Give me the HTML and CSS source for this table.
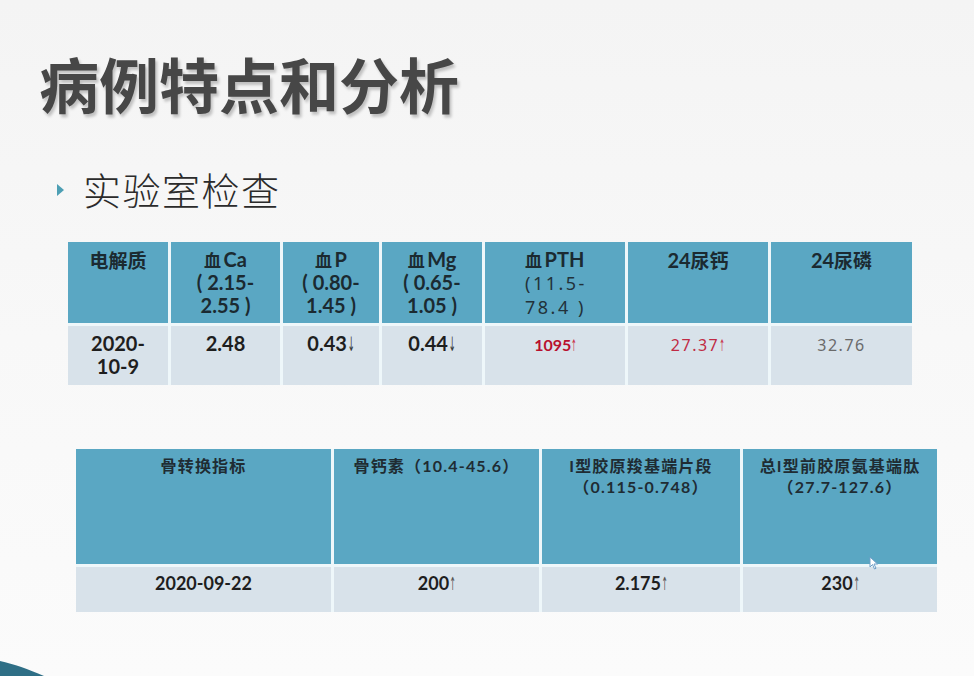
FILE: index.html
```html
<!DOCTYPE html>
<html lang="zh-CN">
<head>
<meta charset="utf-8">
<title>病例特点和分析</title>
<link rel="stylesheet" href="styles.css">
</head>
<body>
<div class="slide">
  <h1 class="title">病例特点和分析</h1>
  <div class="sub">
    <span class="bullet"></span>
    <span class="sub-text">实验室检查</span>
  </div>

  <div class="t1">
    <div class="h"><span class="cjk big">电解质</span></div>
    <div class="h"><span class="cjk">血</span>Ca<br>( 2.15-<br>2.55 )</div>
    <div class="h"><span class="cjk">血</span>P<br>( 0.80-<br>1.45 )</div>
    <div class="h"><span class="cjk">血</span>Mg<br>( 0.65-<br>1.05 )</div>
    <div class="h pth"><span class="cjk">血</span>PTH<br><span class="thin">(11.5-<br>78.4 )</span></div>
    <div class="h">24<span class="cjk big">尿钙</span></div>
    <div class="h">24<span class="cjk big">尿磷</span></div>

    <div class="d">2020-<br>10-9</div>
    <div class="d">2.48</div>
    <div class="d">0.43<span class="arr">↓</span></div>
    <div class="d">0.44<span class="arr">↓</span></div>
    <div class="d"><span class="red-b">1095<span class="arr">↑</span></span></div>
    <div class="d"><span class="red-r">27.37<span class="arr">↑</span></span></div>
    <div class="d"><span class="gray-r">32.76</span></div>
  </div>

  <div class="t2">
    <div class="h">骨转换指标</div>
    <div class="h">骨钙素（10.4-45.6）</div>
    <div class="h">I型胶原羧基端片段<br>（0.115-0.748）</div>
    <div class="h">总I型前胶原氨基端肽<br>（27.7-127.6）</div>

    <div class="d">2020-09-22</div>
    <div class="d">200<span class="arr">↑</span></div>
    <div class="d">2.175<span class="arr">↑</span></div>
    <div class="d">230<span class="arr">↑</span></div>
  </div>

  <svg class="corner" width="50" height="15" viewBox="0 0 50 15" aria-hidden="true">
    <path d="M0 0 C 14 3, 28 8, 44 15 L 0 15 Z" fill="#2f6f86"/>
  </svg>
  <svg class="cursor" width="10" height="14" viewBox="0 0 10 14" aria-hidden="true">
    <path d="M1 1 L1 11 L3.5 8.5 L5.5 13 L7 12.3 L5 8 L8.5 8 Z" fill="#ffffff" stroke="#6f9fc8" stroke-width="1"/>
  </svg>
</div>
</body>
</html>
```
FILE: styles.css
```css
html, body {
  margin: 0;
  padding: 0;
}
body {
  width: 974px;
  height: 676px;
  overflow: hidden;
  background: #f7f7f7;
  font-family: "Lato", "Noto Sans CJK SC", sans-serif;
}
.slide {
  position: relative;
  width: 974px;
  height: 676px;
  background: linear-gradient(180deg, #f4f4f4 0%, #f8f8f8 50%, #fbfbfb 100%);
  overflow: hidden;
}
.title {
  margin: 0;
  padding: 52px 0 0 39px;
  font-family: "Noto Sans CJK SC", sans-serif;
  font-size: 60px;
  line-height: 62px;
  font-weight: 700;
  color: #474747;
  text-shadow: 2px 3px 3px rgba(0, 0, 0, 0.22);
}
.sub {
  display: flex;
  align-items: center;
  margin: 54px 0 0 57px;
  height: 42px;
}
.bullet {
  width: 0;
  height: 0;
  border-top: 6px solid transparent;
  border-bottom: 6px solid transparent;
  border-left: 7px solid #4d9fb4;
  margin-right: 19px;
  margin-top: 2px;
}
.sub-text {
  font-family: "Noto Sans CJK SC", sans-serif;
  font-weight: 300;
  font-size: 38px;
  line-height: 42px;
  letter-spacing: 1.5px;
  color: #2b2b2b;
}
.t1 {
  display: grid;
  grid-template-columns: 100px 109px 96px 100px 140px 140px 141px;
  grid-template-rows: 81px 59px;
  gap: 3px;
  margin: 32px 0 0 68px;
  width: 844px;
}
.t2 {
  display: grid;
  grid-template-columns: 255px 205px 198px 194px;
  grid-template-rows: 115px 45px;
  gap: 3px;
  margin: 64px 0 0 76px;
  width: 861px;
}
.t1, .t2 {
  background: #eef7fa;
}
.h {
  background: #5aa7c3;
  color: #1b2a31;
  text-align: center;
  font-weight: 700;
}
.d {
  background: #d8e2ea;
  color: #1e1e1e;
  text-align: center;
  font-weight: 700;
}
.t1 .h, .t1 .d {
  font-size: 20px;
  line-height: 23px;
  padding-top: 6px;
}
.t1 .cjk {
  font-size: 17px;
  letter-spacing: 2.5px;
  font-family: "Noto Sans CJK SC", sans-serif;
}
.t1 .cjk.big {
  font-size: 19px;
  letter-spacing: 1.5px;
}
.t1 .h .cjk:last-child {
  letter-spacing: 0;
}
.t1 .pth {
  text-align: left;
  padding-left: 40px;
}
.thin {
  font-family: "Noto Sans", sans-serif;
  font-size: 18px;
  font-weight: 400;
  letter-spacing: 2.5px;
  color: #22323a;
}
.arr {
  display: inline-block;
  font-family: "DejaVu Sans", sans-serif;
  font-weight: 400;
  font-size: 1em;
  transform: scaleX(0.42);
  margin: 0 -5px 0 -4px;
  color: #3a3a3a;
}
.red-b {
  color: #b8102e;
  font-size: 16px;
  font-weight: 700;
}
.red-b .arr, .red-r .arr {
  color: #c9344e;
}
.red-r {
  font-family: "Noto Sans", sans-serif;
  color: #c02a44;
  font-size: 16px;
  font-weight: 400;
  letter-spacing: 1.5px;
}
.gray-r {
  font-family: "Noto Sans", sans-serif;
  color: #6a6a6a;
  font-size: 16px;
  font-weight: 400;
  letter-spacing: 1.5px;
}
.t2 .h {
  font-size: 16px;
  line-height: 21px;
  padding-top: 6px;
  letter-spacing: 1.2px;
  color: #1f2c33;
}
.t2 .d {
  font-size: 18px;
  line-height: 22px;
  padding-top: 5px;
  font-weight: 700;
}
.t2 .d .arr {
  color: #555;
}
.corner {
  position: absolute;
  left: 0;
  bottom: 0;
}
.cursor {
  position: absolute;
  left: 869px;
  top: 556px;
}
```
